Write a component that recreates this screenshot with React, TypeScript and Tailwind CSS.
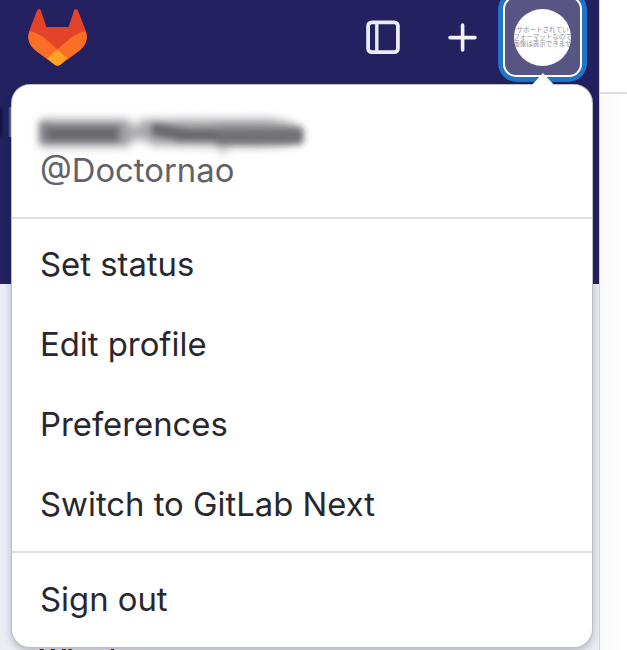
import React from 'react';

const menuItems = ['Set status', 'Edit profile', 'Preferences', 'Switch to GitLab Next'];

const avatarLines = ['サポートされてい', 'フォーマットなので', '画像は表示できませ'];

const GitLabLogo: React.FC = () => (
    <svg className="ml-[28px] mt-[9px] h-[57px] w-[60px]" viewBox="0 0 60 57">
        <path
            d="M9 1.4C10-.2 12.2-.1 12.9 1.5L18.4 18H40.6L46 1.5C46.7-.1 49-.2 49.9 1.4L57.5 21C60.7 28.5 58 36.5 50.6 42.2L32 56Q29.5 57.6 27 56L8.5 42.2C1 36.5-1.4 28.5 1.6 21Z"
            fill="#e24329"
        />
        <path
            d="M57.7 22.2C52 23.3 47.4 25.5 43 28.6L29.4 40.3L39.2 50.4L50.6 42.2C58 36.5 60.5 29.5 57.7 22.2Z"
            fill="#fc6d26"
        />
        <path
            d="M1.4 22.2C7 23.3 11.6 25.5 16 28.6L29.4 40.3L20 50.4L8.5 42.2C1 36.5-1.4 29.5 1.4 22.2Z"
            fill="#fc6d26"
        />
        <path d="M18.9 49.6L29.4 40.3L39.6 49.6L32 56Q29.5 57.6 27 56Z" fill="#fca326" />
    </svg>
);

const SidebarIcon: React.FC = () => (
    <svg className="h-[34px] w-[34px]" viewBox="0 0 34 34" fill="none" stroke="#ececf8">
        <rect x="2.1" y="2.3" width="29.8" height="29.8" rx="3.6" strokeWidth="3.8" />
        <path d="M10.8 2V32" strokeWidth="3.4" />
    </svg>
);

const PlusIcon: React.FC = () => (
    <svg className="h-[29px] w-[29px]" viewBox="0 0 29 29" fill="none" stroke="#f3f2fc" strokeWidth="3.6" strokeLinecap="round">
        <path d="M2 14.6H27M14.6 2V27" />
    </svg>
);

// Smudge that hides the account name
const HiddenName: React.FC = () => (
    <svg className="absolute left-[14px] top-[20px] h-[56px] w-[300px]" viewBox="0 0 300 56" fill="none">
        <g className="blur-[5px]">
            <path d="M14 15H104V41H14Z" fill="#919194" />
            <path d="M112 15L240 14Q266 16 277 24V36Q262 43 200 41V47H194V41L124 40Z" fill="#a0a0a3" />
            <path d="M96 28H130" stroke="#a8a8ac" strokeWidth="14" />
        </g>
        <g className="blur-[3px]">
            <path d="M22 29H92" stroke="#68686d" strokeWidth="13" />
            <path d="M126 24L160 30M150 30H195" stroke="#66666b" strokeWidth="11" />
            <path d="M190 31H276" stroke="#707075" strokeWidth="15" />
            <path d="M18 18V37" stroke="#77777b" strokeWidth="5" />
        </g>
    </svg>
);

const App: React.FC = () => {
    return (
        <div className="relative flex h-[650px] w-[627px] overflow-hidden bg-white font-['Inter',sans-serif]">
            <div className="flex w-[599px] shrink-0 flex-col bg-[#ececf4]">
                <header className="flex h-[284px] shrink-0 items-start bg-[#232160]">
                    <GitLabLogo />
                    <div className="ml-[278px] mt-[20px]">
                        <SidebarIcon />
                    </div>
                    <div className="ml-[48px] mt-[23px]">
                        <PlusIcon />
                    </div>
                    <div className="ml-[21px] mt-[-9px] h-[91px] w-[89px] shrink-0 rounded-[19px] bg-[#1f75cb] p-[5px]">
                        <div className="flex h-full w-full items-start justify-center rounded-[13px] border-[2.5px] border-white bg-[#585584] pt-[11px]">
                            <div className="flex h-[57px] w-[57px] flex-col items-center overflow-hidden rounded-full bg-white pt-[17px]">
                                {avatarLines.map((line) => (
                                    <span key={line} className="whitespace-nowrap font-['Noto_Sans_CJK_JP',sans-serif] text-[6.5px] leading-[7px] text-[#929296]">
                                        {line}
                                    </span>
                                ))}
                            </div>
                        </div>
                    </div>
                </header>
                <p className="ml-[39px] mt-[359px] whitespace-nowrap text-[27px] font-semibold leading-[34px] text-[#28272d]">What's new</p>
            </div>
            <div className="flex grow flex-col border-l border-[#d4d4de] bg-linear-to-r from-[#fafafa] to-white">
                <div className="h-[94px] border-b-2 border-[#dedee0] bg-white" />
            </div>

            <div className="absolute left-0 top-[108px] h-[28px] w-[2px] bg-[#0b0a2c] blur-[1px]" />
            <div className="absolute left-[12px] top-[85px] flex h-[562px] w-[580px] flex-col rounded-[18px] bg-white shadow-[0_0_0_1px_#bfbfc6,0_3px_8px_rgba(20,20,50,0.3)]">
                <div className="absolute left-[519px] top-[-12px] h-0 w-0 border-x-[12px] border-b-[13px] border-x-transparent border-b-white" />
                <div className="absolute left-[-4px] top-[22px] h-[30px] w-[8px] bg-linear-to-r from-transparent to-white" />
                <HiddenName />
                <div className="h-[134px] shrink-0 border-b-2 border-[#dfdfe2] pl-[28px] pt-[64px]">
                    <p className="text-[32.85px] leading-[42px] text-[#626168]">@Doctornao</p>
                </div>
                <ul className="h-[334px] shrink-0 border-b-2 border-[#dfdfe2] pt-[6px]">
                    {menuItems.map((item) => (
                        <li key={item} className="flex h-[80px] items-center pl-[28px] text-[32.85px] text-[#28272d]">
                            {item}
                        </li>
                    ))}
                </ul>
                <div className="flex grow items-center pl-[28px] text-[32.85px] text-[#28272d]">Sign out</div>
            </div>
        </div>
    );
};

export default App;
